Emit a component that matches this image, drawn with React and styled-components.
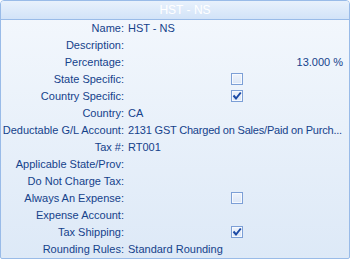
import React from 'react';
import styled, { createGlobalStyle } from 'styled-components';

const GlobalStyle = createGlobalStyle`
	html, body {
		margin: 0;
		padding: 0;
		background: #ffffff;
	}
	body {
		font-family: 'Liberation Sans', Arial, sans-serif;
	}
`;

const rows = [
	{ label: 'Name', value: 'HST - NS' },
	{ label: 'Description' },
	{ label: 'Percentage', value: '13.000 %', align: 'right' },
	{ label: 'State Specific', check: false },
	{ label: 'Country Specific', check: true },
	{ label: 'Country', value: 'CA' },
	{ label: 'Deductable G/L Account', value: '2131 GST Charged on Sales/Paid on Purch...', tight: true },
	{ label: 'Tax #', value: 'RT001' },
	{ label: 'Applicable State/Prov' },
	{ label: 'Do Not Charge Tax' },
	{ label: 'Always An Expense', check: false },
	{ label: 'Expense Account' },
	{ label: 'Tax Shipping', check: true },
	{ label: 'Rounding Rules', value: 'Standard Rounding' },
];

const CheckBox = ({ checked }) => (
	<Box>
		{checked && (
			<svg width="10" height="10" viewBox="0 0 10 10">
				<path d="M1.5 4.5 L4 7.5 L8.8 1.5" fill="none" stroke="#1c4aa5" strokeWidth="2" />
			</svg>
		)}
	</Box>
);

const App = () => (
	<>
		<GlobalStyle />
		<Panel>
			<Header>HST - NS</Header>
			<Body>
				{rows.map((r) => (
					<Row key={r.label}>
						<Label>{r.label}:</Label>
						{r.check !== undefined ? (
							<CheckCell>
								<CheckBox checked={r.check} />
							</CheckCell>
						) : (
							<Value align={r.align} $tight={r.tight}>
								{r.value}
							</Value>
						)}
					</Row>
				))}
			</Body>
		</Panel>
	</>
);

const Panel = styled.div`
	width: 350px;
	height: 259px;
	box-sizing: border-box;
	border: 1px solid #99bbe8;
	border-radius: 4px 4px 2px 2px;
	overflow: hidden;
	display: flex;
	flex-direction: column;
	background: linear-gradient(to bottom, #f4f8fd 0%, #dde9f7 100%);
`;

const Header = styled.div`
	height: 18px;
	flex: none;
	border-bottom: 1px solid #99bbe8;
	background: linear-gradient(to bottom, #e8f1fc 0%, #d2e3f8 100%);
	color: #ffffff;
	font-size: 12px;
	line-height: 18px;
	text-align: center;
	padding-left: 20px;
	box-sizing: content-box;
`;

const Body = styled.div`
	display: flex;
	flex-direction: column;
`;

const Row = styled.div`
	display: grid;
	grid-template-columns: 123px 1fr;
	column-gap: 4px;
	height: 17px;
	box-sizing: border-box;
	padding-bottom: 1px;
	align-items: center;
	font-size: 11px;
	color: #15428b;
`;

const Label = styled.div`
	text-align: right;
	white-space: nowrap;
`;

const Value = styled.div`
	white-space: nowrap;
	overflow: hidden;
	text-align: ${(p) => p.align || 'left'};
	letter-spacing: ${(p) => (p.$tight ? '-0.2px' : 'normal')};
	padding-right: 6px;
`;

const CheckCell = styled.div`
	display: flex;
	justify-content: center;
	padding-right: 4px;
`;

const Box = styled.div`
	width: 10px;
	height: 10px;
	border: 1px solid #7c9fd6;
	background: linear-gradient(to bottom, #eef3fb, #dbe6f6);
	box-shadow: inset 0 0 0 1px #f6f9fe;
	display: flex;
	align-items: center;
	justify-content: center;
`;

export default App;
